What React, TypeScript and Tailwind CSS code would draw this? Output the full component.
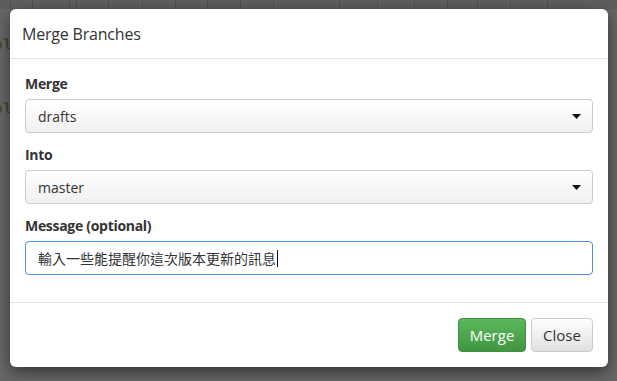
import React from "react";

const seps = [10, 32, 69, 76, 108, 142, 175, 207, 240, 273, 339, 377, 414, 447, 477, 510, 547];

const Caret: React.FC = () => (
  <svg width="9" height="5" viewBox="0 0 9 5" className="shrink-0">
    <path d="M0 0h9L4.5 5z" fill="#111" />
  </svg>
);

const FakeSelect: React.FC<{ value: string }> = ({ value }) => (
  <div className="flex h-[34px] items-center justify-between rounded-[4px] border border-[#cccccc] bg-gradient-to-b from-[#ffffff] to-[#f0f0f0] pl-[12px] pr-[11px] text-[14px] text-[#333333]">
    <span>{value}</span>
    <Caret />
  </div>
);

const Field: React.FC<{ label: string; children: React.ReactNode }> = ({ label, children }) => (
  <div className="mb-[12px]">
    <div className="mb-[5px] text-[14px] font-bold leading-[20px] tracking-[-0.3px] text-[#333333]">{label}</div>
    {children}
  </div>
);

const App: React.FC = () => {
  return (
    <div
      className="relative h-[381px] w-[617px] overflow-hidden bg-[#676767]"
      style={{ fontFamily: "'Open Sans', 'Noto Sans CJK TC', sans-serif" }}
    >
      {/* editor behind the overlay */}
      <div className="relative h-[9px] bg-[#5e5e5e]">
        {seps.map((x) => (
          <div key={x} className="absolute top-0 h-[8px] w-px bg-[#505050]" style={{ left: x }} />
        ))}
      </div>
      <div className="font-mono text-[14px] font-bold leading-[18px] text-[#4a4a22] -ml-[6px]">
        <div className="mt-[27px]">ol</div>
        <div className="mt-[46px]">ol</div>
      </div>

      {/* dialog */}
      <div className="absolute left-[10px] top-[9px] w-[598px] rounded-[6px] bg-white shadow-[0_5px_15px_rgba(0,0,0,0.5)]">
        <div className="flex h-[50px] items-center border-b border-[#e5e5e5] pl-[12px] text-[16px] tracking-[-0.2px] text-[#333333]">
          Merge Branches
        </div>
        <div className="px-[15px] pt-[15px] pb-[15px]">
          <Field label="Merge">
            <FakeSelect value="drafts" />
          </Field>
          <Field label="Into">
            <FakeSelect value="master" />
          </Field>
          <Field label="Message (optional)">
            <div className="flex h-[34px] items-center rounded-[4px] border border-[#4a8fd8] pl-[12px] text-[14px] text-[#333333]">
              <span style={{ fontFamily: "'Noto Sans CJK TC', sans-serif" }}>輸入一些能提醒你這次版本更新的訊息</span>
              <span className="ml-px h-[17px] w-px bg-[#111]" />
            </div>
          </Field>
        </div>
        <div className="flex justify-end gap-[5px] border-t border-[#e5e5e5] p-[15px]">
          <button
            type="button"
            className="h-[34px] w-[68px] rounded-[4px] border border-[#3e8f3e] bg-gradient-to-b from-[#5cb85c] to-[#419641] text-[15px] text-white"
          >
            Merge
          </button>
          <button
            type="button"
            className="h-[34px] w-[62px] rounded-[4px] border border-[#cccccc] bg-gradient-to-b from-[#ffffff] to-[#e0e0e0] text-[15px] text-[#333333]"
          >
            Close
          </button>
        </div>
      </div>
    </div>
  );
};

export default App;
